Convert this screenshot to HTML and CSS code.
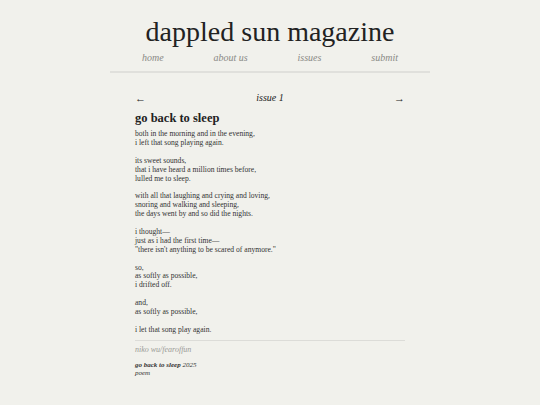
FILE: index.html
```html
<!DOCTYPE html>
<html lang="en">
<head>
<meta charset="utf-8">
<title>dappled sun magazine</title>
<link rel="stylesheet" href="styles.css">
</head>
<body>
<div class="page">
  <header class="masthead">
    <h1 class="site-title">dappled sun magazine</h1>
    <nav class="nav">
      <a href="#">home</a>
      <a href="#">about us</a>
      <a href="#">issues</a>
      <a href="#">submit</a>
    </nav>
  </header>
  <main class="content">
    <div class="issue-bar">
      <span class="arrow">&larr;</span>
      <span class="issue">issue 1</span>
      <span class="arrow">&rarr;</span>
    </div>
    <h2 class="poem-title">go back to sleep</h2>
    <div class="poem">
      <p>both in the morning and in the evening,<br>i left that song playing again.</p>
      <p>its sweet sounds,<br>that i have heard a million times before,<br>lulled me to sleep.</p>
      <p>with all that laughing and crying and loving,<br>snoring and walking and sleeping,<br>the days went by and so did the nights.</p>
      <p>i thought—<br>just as i had the first time—<br>"there isn't anything to be scared of anymore."</p>
      <p>so,<br>as softly as possible,<br>i drifted off.</p>
      <p>and,<br>as softly as possible,</p>
      <p>i let that song play again.</p>
    </div>
    <div class="byline">niko wu/fearoffun</div>
    <div class="meta">
      <div><b>go back to sleep</b> 2025</div>
      <div>poem</div>
    </div>
  </main>
</div>
</body>
</html>
```

FILE: styles.css
```css
html, body {
  margin: 0;
  padding: 0;
  background: #f1f1ec;
  color: #222;
}
body {
  font-family: "Liberation Serif", Georgia, serif;
}
.page {
  width: 320px;
  margin: 0 auto;
}
.masthead {
  border-bottom: 2px solid #e0e0dc;
  padding-top: 14px;
  padding-bottom: 6px;
}
.site-title {
  margin: 0;
  text-align: center;
  font-weight: normal;
  font-size: 28px;
  line-height: 36px;
  color: #222;
}
.nav {
  display: flex;
  justify-content: space-between;
  padding: 0 32px;
  margin-top: 1px;
}
.nav a {
  color: #8a8a86;
  text-decoration: none;
  font-style: italic;
  font-size: 10px;
  line-height: 14px;
}
.content {
  padding: 0 25px;
  margin-top: 18px;
}
.issue-bar {
  display: flex;
  justify-content: space-between;
  align-items: center;
  font-size: 10px;
  line-height: 14px;
}
.issue {
  font-style: italic;
}
.arrow {
  font-size: 11px;
}
.poem-title {
  margin: 5px 0 4px;
  font-size: 12.5px;
  line-height: 16px;
  font-weight: bold;
}
.poem {
  font-size: 7.6px;
  line-height: 8.9px;
  color: #333;
}
.poem p {
  margin: 0 0 8.9px;
}
.poem p:last-child {
  margin-bottom: 0;
}
.byline {
  border-top: 1px solid #dcdcd8;
  margin-top: 5px;
  padding-top: 3px;
  font-style: italic;
  color: #9a9a96;
  font-size: 8px;
  line-height: 11px;
}
.meta {
  margin-top: 6px;
  font-style: italic;
  font-size: 7px;
  line-height: 8px;
  color: #333;
}
```
